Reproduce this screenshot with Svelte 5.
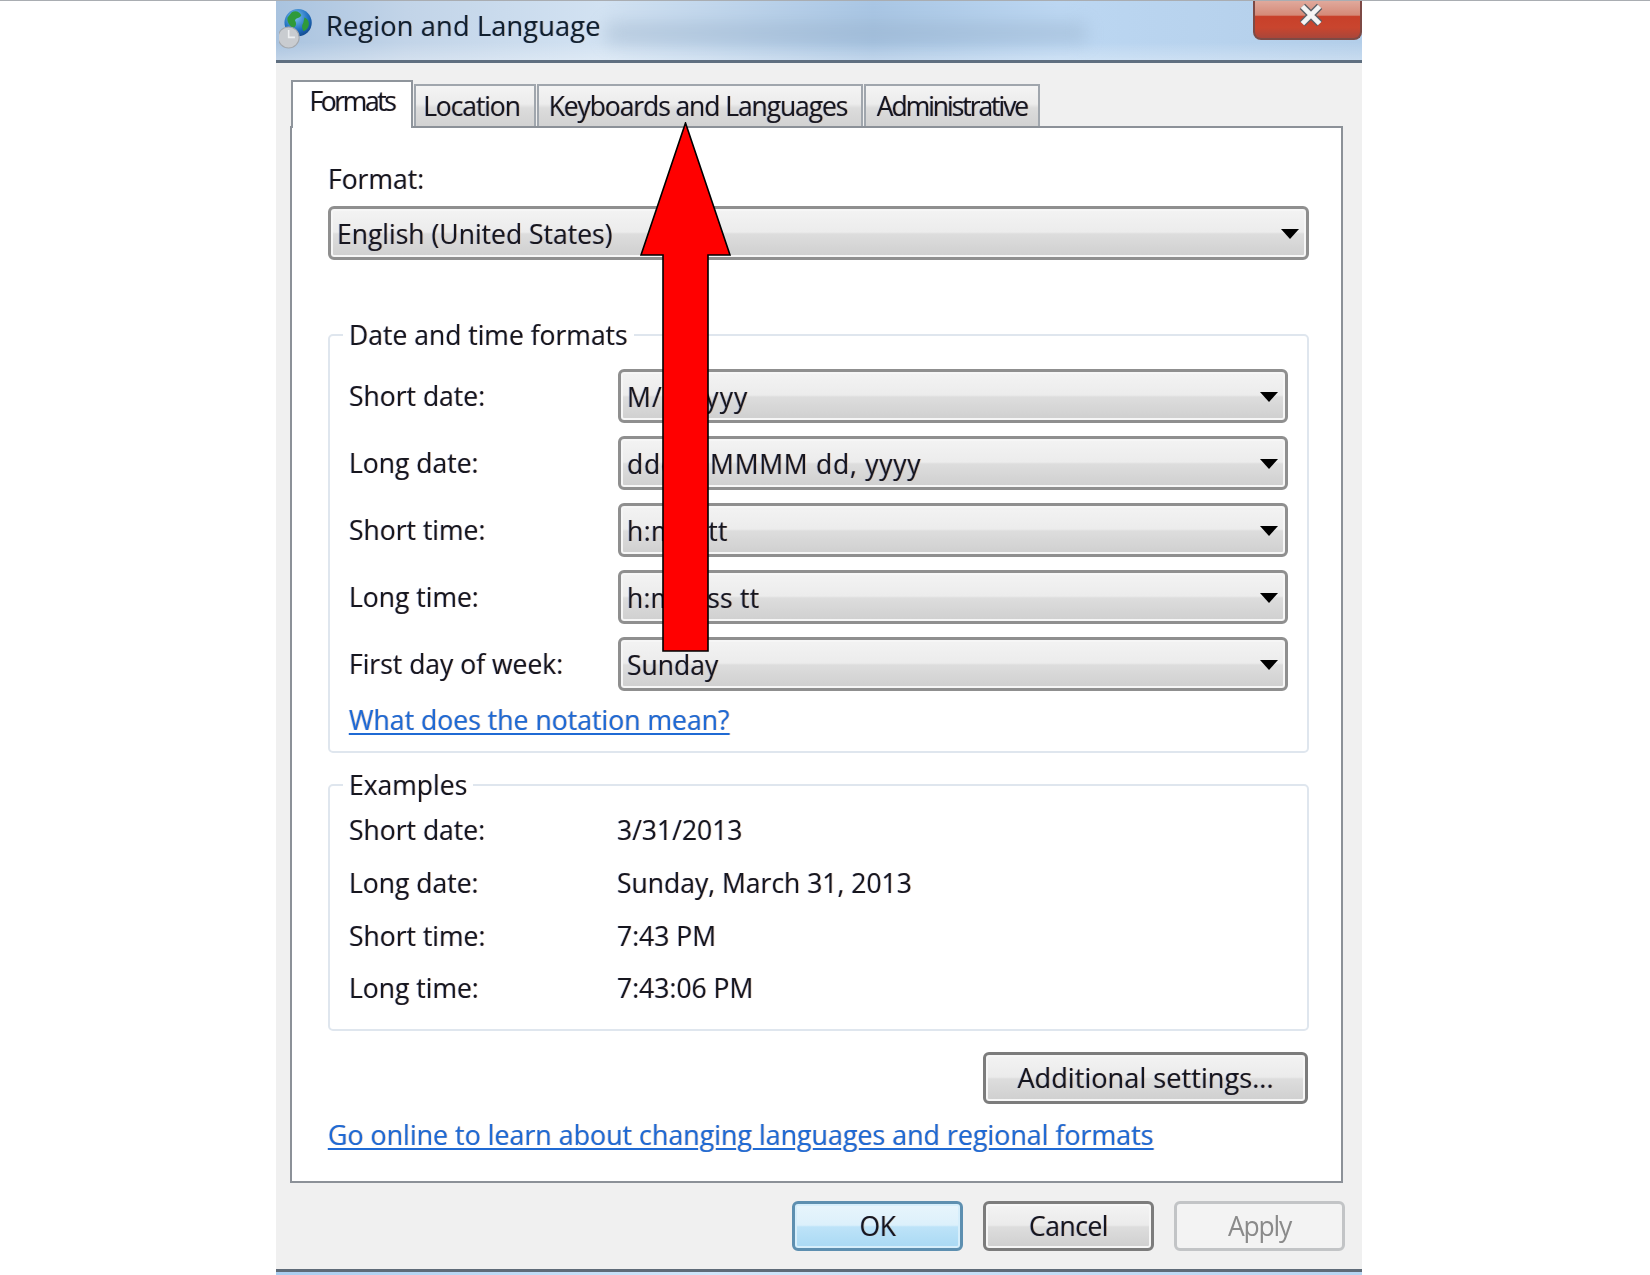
<script>
  const tabs = [
    { label: 'Formats', w: 122, on: true, ls: -2.4 },
    { label: 'Location', w: 122, ls: -1.1, nudge: 7 },
    { label: 'Keyboards and Languages', w: 326, ls: -1.1, nudge: 4 },
    { label: 'Administrative', w: 176, ls: -2.05 }
  ];
  const formats = [
    ['Short date:', 'M/d/yyyy', 1.1],
    ['Long date:', 'dddd, MMMM dd, yyyy', 0.75],
    ['Short time:', 'h:mm tt', 0.4],
    ['Long time:', 'h:mm:ss tt', 0.2],
    ['First day of week:', 'Sunday', 0]
  ];
  const examples = [
    ['Short date:', '3/31/2013'],
    ['Long date:', 'Sunday, March 31, 2013'],
    ['Short time:', '7:43 PM'],
    ['Long time:', '7:43:06 PM']
  ];
</script>

<div class="page">
  <div class="topline"></div>
  <div class="window">
    <header class="title">
      <div class="smear"></div>
      <svg class="globe" viewBox="0 0 32 40" width="34" height="42" aria-hidden="true">
        <defs>
          <radialGradient id="g" cx="0.4" cy="0.3" r="0.8">
            <stop offset="0" stop-color="#7fc4ee" />
            <stop offset="0.6" stop-color="#1f6fc0" />
            <stop offset="1" stop-color="#0f3f80" />
          </radialGradient>
        </defs>
        <circle cx="18" cy="14" r="13" fill="url(#g)" />
        <path d="M12 4c4-2 8 0 9 3-1 3-5 2-6 5 2 3 1 6-2 7-3-2-6-6-5-10zM24 9c3 1 5 4 4 8-1 3-3 5-5 5-1-3-2-5 0-8z" fill="#2f9a3a" />
        <circle cx="9" cy="28" r="10" fill="#c9ccd0" stroke="#a5a9ae" />
        <path d="M9 21v7h6" stroke="#eef0f2" stroke-width="1.5" fill="none" />
      </svg>
      <span class="title-text">Region and Language</span>
      <div class="close">
        <svg viewBox="0 0 26 22" width="28" height="24" aria-hidden="true">
          <path d="M5 3l16 16M21 3L5 19" stroke="#5a5f66" stroke-width="7" fill="none" />
          <path d="M5 3l16 16M21 3L5 19" stroke="#f4f4f4" stroke-width="4.5" fill="none" />
        </svg>
      </div>
    </header>

    <div class="body">
      <div class="tabs">
        {#each tabs as t}
          <div class="tab" class:on={t.on} style="width:{t.w}px;letter-spacing:{t.ls}px;padding-right:{t.nudge ?? 0}px">{t.label}</div>
        {/each}
      </div>

      <section class="panel">
        <div class="line">Format:</div>
        <div class="combo main"><span>English (United States)</span><i></i></div>

        <fieldset class="group first">
          <legend>Date and time formats</legend>
          <div class="rows">
            {#each formats as [k, v, ls]}
              <div class="row">
                <span class="key">{k}</span>
                <div class="combo"><span style="letter-spacing:{ls}px">{v}</span><i></i></div>
              </div>
            {/each}
          </div>
          <div class="line link notation"><a href="#top">What does the notation mean?</a></div>
        </fieldset>

        <fieldset class="group second">
          <legend>Examples</legend>
          <div class="examples">
            {#each examples as [k, v]}
              <div class="example"><span class="key">{k}</span><span>{v}</span></div>
            {/each}
          </div>
        </fieldset>

        <div class="actions"><button class="btn wide">Additional settings...</button></div>
        <div class="line link online"><a href="#top">Go online to learn about changing languages and regional formats</a></div>
      </section>

      <div class="footer">
        <button class="btn ok">OK</button>
        <button class="btn">Cancel</button>
        <button class="btn off">Apply</button>
      </div>
    </div>
    <div class="strip"></div>
  </div>

  <svg class="arrow" viewBox="0 0 92 531" width="92" height="531" aria-hidden="true">
    <path d="M45.5 1L90 133H68V529H23V133H1Z" fill="#ff0000" stroke="#000" stroke-width="1.6" />
  </svg>
</div>

<style>
  :global(body) {
    margin: 0;
    background: #fff;
  }
  .page {
    position: relative;
    height: 1275px;
    overflow: hidden;
    font-family: 'Open Sans', 'Noto Sans', sans-serif;
    font-size: 26.5px;
    color: #16161f;
    text-shadow:
      0.7px 0 0 rgba(190, 100, 20, 0.28),
      -0.7px 0 0 rgba(20, 70, 190, 0.28);
  }
  .topline {
    height: 1px;
    background: #a9adb2;
  }
  .window {
    width: 1086px;
    margin-left: 276px;
    filter: blur(0.55px);
  }
  .title {
    position: relative;
    height: 59px;
    display: flex;
    align-items: center;
    padding-left: 3px;
    gap: 13px;
    border-bottom: 3px solid #5f6f80;
    background:
      linear-gradient(to bottom, rgba(255, 255, 255, 0) 70%, rgba(255, 255, 255, 0.28) 100%),
      linear-gradient(to right, #a9c3df 0%, #c2d4e8 12%, #d2e2f2 30%, #a9c6e4 55%, #bcd7f2 72%, #b3cee9 100%);
  }
  .smear {
    position: absolute;
    left: 330px;
    top: 22px;
    width: 480px;
    height: 20px;
    background: #8ea6bf;
    opacity: 0.38;
    filter: blur(9px);
  }
  .globe {
    position: relative;
    margin-top: -3px;
  }
  .title-text {
    position: relative;
    margin-top: -10px;
    font-size: 27.2px;
    letter-spacing: 0.15px;
    color: #10202f;
  }
  .close {
    position: absolute;
    right: 0;
    top: 0;
    width: 105px;
    height: 37px;
    display: flex;
    align-items: center;
    justify-content: center;
    border: 2px solid #7d4a45;
    border-top: 0;
    border-radius: 0 0 8px 8px;
    background: linear-gradient(to bottom, #e0a99c 0%, #d58a78 38%, #c8402a 42%, #c9452e 72%, #a9463a 100%);
  }
  .close svg {
    margin: -9px 0 0 6px;
  }
  .body {
    height: 1209px;
    box-sizing: border-box;
    padding-top: 17px;
    background: #f0f0f0;
    border-bottom: 3px solid #5f6b78;
  }
  .tabs {
    display: flex;
    align-items: flex-end;
    height: 46px;
    margin-left: 15px;
    gap: 1px;
  }
  .tab {
    height: 42px;
    box-sizing: border-box;
    display: flex;
    align-items: center;
    justify-content: center;
    border: 2px solid #a0a6ad;
    border-bottom: 0;
    background: linear-gradient(to bottom, #f4f4f4 0%, #ececec 45%, #dcdcdc 55%, #d2d2d2 100%);
  }
  .tab.on {
    position: relative;
    height: 48px;
    margin-bottom: -2px;
    padding-bottom: 8px;
    background: #fff;
    z-index: 1;
    border-color: #8f959c;
  }
  .panel {
    height: 1057px;
    box-sizing: border-box;
    margin: 0 19px 0 14px;
    padding: 34px 32px 0 36px;
    background: #fff;
    border: 2px solid #8c9198;
  }
  .line {
    height: 34px;
    line-height: 34px;
  }
  .combo {
    height: 54px;
    box-sizing: border-box;
    display: flex;
    align-items: center;
    justify-content: space-between;
    padding: 2px 7px 0 6px;
    border: 3px solid #8f8f8f;
    border-radius: 6px;
    background: linear-gradient(to bottom, #f3f3f3 0%, #ececec 48%, #dddddd 52%, #cfcfcf 100%);
    box-shadow: inset 0 0 0 2px #f6f6f6;
  }
  .combo.main {
    margin-top: 10px;
  }
  .combo i {
    width: 0;
    height: 0;
    border-left: 9px solid transparent;
    border-right: 9px solid transparent;
    border-top: 10px solid #000;
  }
  .group {
    margin: 0;
    padding: 0 19px;
    min-width: 0;
    box-sizing: border-box;
    border: 2px solid #dfe6ee;
    border-radius: 5px;
  }
  .group legend {
    height: 34px;
    line-height: 34px;
    padding: 0 6px;
    margin-left: -6px;
  }
  .group.first {
    height: 435px;
    margin-top: 58px;
  }
  .group.second {
    height: 263px;
    margin-top: 15px;
  }
  .rows {
    display: flex;
    flex-direction: column;
    gap: 13px;
    padding-top: 17px;
  }
  .row {
    display: grid;
    grid-template-columns: 269px 1fr;
    align-items: center;
  }
  .notation {
    margin-top: 12px;
  }
  .link a {
    color: #1f6ad4;
    text-decoration: underline;
    text-underline-offset: 3px;
    text-decoration-thickness: 2px;
    font-size: 26.6px;
  }
  .online a {
    font-size: 26.8px;
  }
  .examples {
    padding-top: 2px;
  }
  .example {
    display: grid;
    grid-template-columns: 268px 1fr;
    height: 52.7px;
    align-items: center;
  }
  .actions {
    display: flex;
    justify-content: flex-end;
    margin: 21px 1px 0 0;
  }
  .online {
    margin-top: 14px;
  }
  .btn {
    width: 171px;
    height: 50px;
    padding: 0;
    font: inherit;
    color: inherit;
    text-shadow: inherit;
    border: 3px solid #7c7c7c;
    border-radius: 6px;
    background: linear-gradient(to bottom, #f3f3f3 0%, #ebebeb 48%, #dddddd 52%, #cfcfcf 100%);
    box-shadow: inset 0 0 0 2px #f6f6f6;
  }
  .btn.wide {
    width: 325px;
    height: 52px;
    padding-bottom: 1px;
    font-size: 27.2px;
  }
  .footer {
    display: flex;
    justify-content: flex-end;
    gap: 20px;
    padding: 18px 17px 0 0;
  }
  .footer .btn {
    letter-spacing: -0.5px;
  }
  .footer .btn.off {
    letter-spacing: -1.2px;
  }
  .btn.ok {
    border-color: #5d8fb0;
    background: linear-gradient(to bottom, #e8f5fc 0%, #dcf0fb 48%, #bde3f8 52%, #a9d9f4 100%);
    box-shadow: inset 0 0 0 2px #d6eefb;
  }
  .btn.off {
    color: #8a8a8a;
    border-color: #c2c4c6;
    background: #f3f3f3;
    box-shadow: none;
    text-shadow: none;
  }
  .strip {
    height: 5px;
    background: linear-gradient(to right, #a9cdef, #cfe6fa 40%, #b6d5f2);
  }
  .arrow {
    position: absolute;
    left: 640px;
    top: 122px;
  }
</style>
